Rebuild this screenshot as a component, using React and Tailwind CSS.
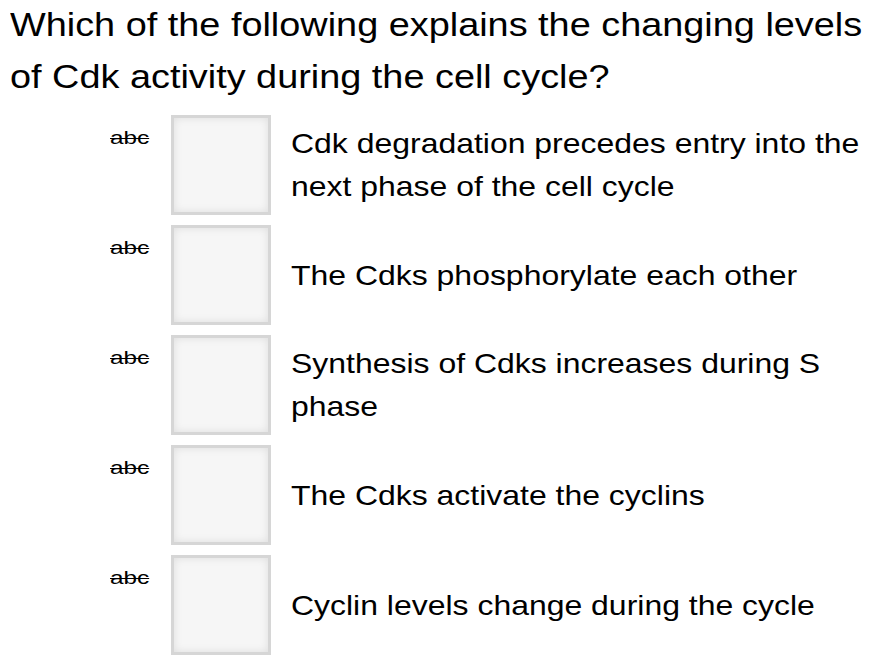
const options = [
  "Cdk degradation precedes entry into the next phase of the cell cycle",
  "The Cdks phosphorylate each other",
  "Synthesis of Cdks increases during S phase",
  "The Cdks activate the cyclins",
  "Cyclin levels change during the cycle",
];

export default function App() {
  return (
    <div className="w-[876px] h-[670px] bg-white text-black overflow-hidden font-['Liberation_Sans',Arial,sans-serif]">
      <h1 className="ml-[10px] mt-[-1px] w-[755px] origin-left scale-x-[1.147] text-[33px] leading-[52px] font-normal">
        Which of the following explains the changing levels of Cdk activity during the cell cycle?
      </h1>
      <div className="flex flex-col gap-[10px] pl-[110px] mt-[12px]">
        {options.map((text, i) => (
          <div key={i} className="flex items-stretch h-[100px]">
            <div className="w-[61px] pt-[12px]">
              <span className="inline-block origin-left scale-x-[1.35] text-[18px] leading-[19px] line-through">abc</span>
            </div>
            <div className="w-[100px] h-[100px] border-[3px] border-[#d6d6d6] bg-[#f6f6f6] shadow-[inset_0_0_8px_rgba(0,0,0,0.1)]" />
            <div className="flex items-center pl-[20px]">
              <p className="w-[512px] origin-left scale-x-[1.141] text-[28px] leading-[43px]">{text}</p>
            </div>
          </div>
        ))}
      </div>
    </div>
  );
}
